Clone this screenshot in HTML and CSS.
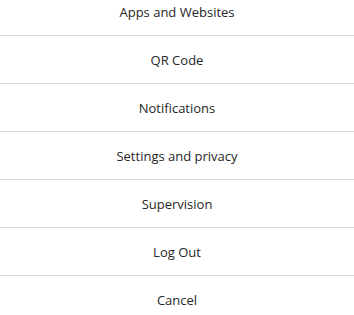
FILE: index.html
```html
<!DOCTYPE html>
<html>
<head>
<meta charset="utf-8">
<link rel="stylesheet" href="styles.css">
</head>
<body>
<div class="menu">
  <button class="item">Apps and Websites</button>
  <button class="item">QR Code</button>
  <button class="item">Notifications</button>
  <button class="item">Settings and privacy</button>
  <button class="item">Supervision</button>
  <button class="item">Log Out</button>
  <button class="item">Cancel</button>
</div>
</body>
</html>
```
FILE: styles.css
```css
html, body {
  margin: 0;
  padding: 0;
  background: #ffffff;
}
.menu {
  display: flex;
  flex-direction: column;
  margin-top: -12px;
  width: 354px;
}
.item {
  display: flex;
  align-items: center;
  justify-content: center;
  height: 48px;
  box-sizing: border-box;
  border: 0;
  border-bottom: 1px solid #dbdbdb;
  background: #ffffff;
  padding: 0;
  margin: 0;
  font-family: "Open Sans", "Noto Sans", sans-serif;
  font-size: 13px;
  color: #262626;
}
```
